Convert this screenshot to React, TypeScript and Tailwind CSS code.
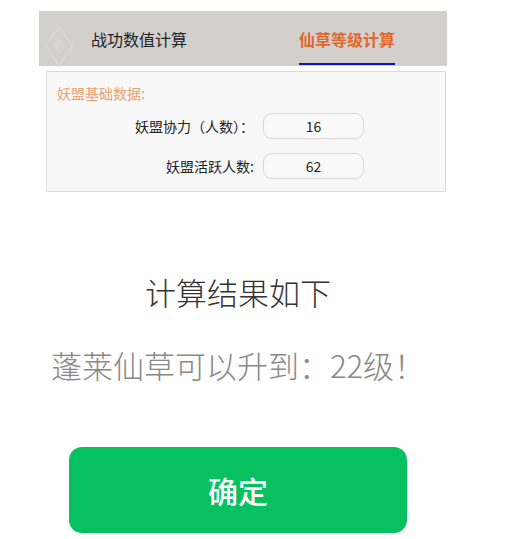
import React from "react";

export default function App() {
  const font = { fontFamily: '"Noto Sans CJK SC", "Noto Sans", sans-serif' };
  return (
    <div className="w-[510px] h-[539px] bg-white overflow-hidden" style={font}>
      <div className="pt-[11px] pl-[39px]">
        <div className="relative w-[408px] h-[55px] bg-[#d3cfcd] flex">
          <svg className="absolute left-[4px] top-[14px]" width="32" height="42" viewBox="0 0 32 42">
            <path d="M16 2 L30 21 L16 40 L2 21 Z" fill="none" stroke="#d8d4d2" strokeWidth="3" />
            <path d="M16 12 L23 21 L16 30 L9 21 Z" fill="#d7d3d1" />
          </svg>
          <div className="flex-1 flex items-center justify-center">
            <span className="text-[16px] text-[#222] leading-none">战功数值计算</span>
          </div>
          <div className="flex-1 flex items-center justify-center pl-[8px]">
            <div className="relative h-full flex items-center">
              <span className="text-[16px] font-bold text-[#e0692a] leading-none">仙草等级计算</span>
              <div className="absolute left-0 right-0 bottom-[1px] h-[2px] bg-[#1010c8]" />
            </div>
          </div>
        </div>
        <div className="ml-[7px] mt-[5px] w-[400px] h-[121px] bg-[#f8f8f8] border border-[#dcdcdc] pt-[12px]">
          <div className="pl-[10px] text-[14px] leading-[18px] text-[#eba170]">妖盟基础数据:</div>
          <div className="mt-[11px] flex items-center">
            <div className="w-[207px] text-right text-[14px] text-[#222]">妖盟协力（人数）：</div>
            <div className="ml-[9px] w-[101px] h-[26px] rounded-[9px] border border-[#d8d8d8] bg-[#fafafa] flex items-center justify-center text-[14px] text-[#222]">16</div>
          </div>
          <div className="mt-[14px] flex items-center">
            <div className="w-[207px] text-right text-[14px] text-[#222]">妖盟活跃人数:</div>
            <div className="ml-[9px] w-[101px] h-[26px] rounded-[9px] border border-[#d8d8d8] bg-[#fafafa] flex items-center justify-center text-[14px] text-[#222]">62</div>
          </div>
        </div>
      </div>
      <div className="w-[476px] flex flex-col items-center">
        <div className="mt-[82px] text-[31px] leading-[36px] font-light text-[#333]">计算结果如下</div>
        <div className="mt-[37px] text-[31px] leading-[36px] font-light text-[#888] whitespace-nowrap">蓬莱仙草可以升到：22级！</div>
        <div className="mt-[64px] w-[338px] h-[86px] rounded-[13px] bg-[#07c160] flex items-center justify-center">
          <span className="text-[30px] font-medium text-white leading-none">确定</span>
        </div>
      </div>
    </div>
  );
}
